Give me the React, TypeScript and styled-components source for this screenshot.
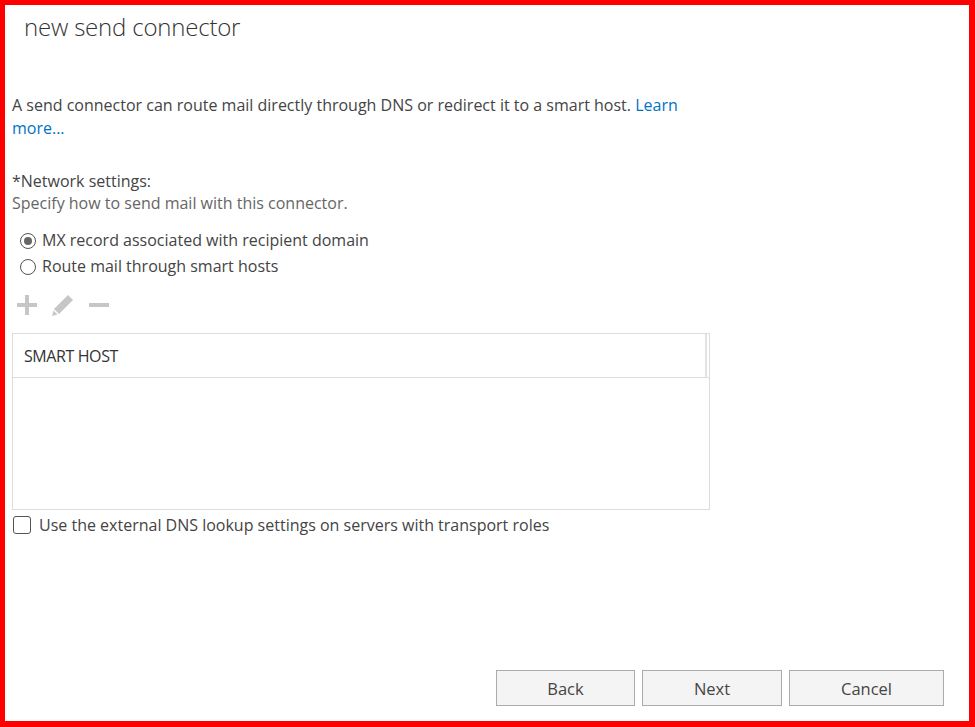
import styled, { createGlobalStyle } from 'styled-components';

const GlobalStyle = createGlobalStyle`
  html, body {
    margin: 0;
    padding: 0;
    background: #ffffff;
  }
  * {
    box-sizing: border-box;
  }
`;

const Frame = styled.div`
  width: 975px;
  height: 727px;
  border: 5px solid #ff0000;
  border-right-width: 6px;
  border-bottom-width: 6px;
  background: #ffffff;
  display: flex;
  flex-direction: column;
  font-family: "Open Sans", "Noto Sans", sans-serif;
  color: #444444;
  overflow: hidden;
`;

const Title = styled.h1`
  margin: 0;
  padding: 7px 0 0 19px;
  font-size: 24px;
  font-weight: 300;
  color: #333333;
  line-height: 30px;
  letter-spacing: -0.2px;
`;

const Body = styled.div`
  flex: 1;
  padding: 52px 0 0 7px;
  display: flex;
  flex-direction: column;
`;

const Intro = styled.p`
  margin: 0;
  width: 690px;
  font-size: 16px;
  line-height: 23px;
  color: #444444;
`;

const Link = styled.a`
  color: #0072c6;
  text-decoration: none;
`;

const Section = styled.div`
  margin-top: 30px;
  display: flex;
  flex-direction: column;
`;

const Label = styled.div<{ muted?: boolean }>`
  font-size: 16px;
  line-height: 22px;
  color: ${p => (p.muted ? '#666666' : '#444444')};
`;

const RadioList = styled.div`
  margin-top: 15px;
  padding-left: 8px;
  display: flex;
  flex-direction: column;
  gap: 3px;
`;

const RadioRow = styled.label`
  display: flex;
  align-items: center;
  gap: 6px;
  font-size: 16px;
  line-height: 23px;
  color: #444444;
`;

const RadioDot = styled.span<{ checked?: boolean }>`
  width: 16px;
  height: 16px;
  border-radius: 50%;
  border: 1.5px solid #555555;
  display: flex;
  align-items: center;
  justify-content: center;
  &::after {
    content: '';
    width: 8px;
    height: 8px;
    border-radius: 50%;
    background: #666666;
    display: ${p => (p.checked ? 'block' : 'none')};
  }
`;

const Toolbar = styled.div`
  margin-top: 13px;
  display: flex;
  align-items: center;
  gap: 12px;
  padding-left: 3px;
  height: 28px;
`;

const ToolIcon = styled.span`
  width: 24px;
  height: 24px;
  display: flex;
  align-items: center;
  justify-content: center;
  color: #c6c6c6;
`;

const Table = styled.div`
  margin-top: 14px;
  width: 698px;
  height: 177px;
  border: 1px solid #dddddd;
  display: flex;
  flex-direction: column;
`;

const HeaderRow = styled.div`
  height: 44px;
  display: flex;
  border-bottom: 1px solid #dddddd;
`;

const HeaderCell = styled.div`
  flex: 1;
  display: flex;
  align-items: center;
  padding-left: 11px;
  font-size: 16px;
  color: #333333;
  letter-spacing: -0.4px;
  border-right: 2px solid #e3e3e3;
`;

const HeaderGap = styled.div`
  width: 2px;
`;

const CheckRow = styled.label`
  margin-top: 4px;
  display: flex;
  align-items: center;
  gap: 8px;
  font-size: 16px;
  line-height: 22px;
  color: #444444;
`;

const CheckBox = styled.span`
  width: 18px;
  height: 18px;
  border: 1.5px solid #555555;
  border-radius: 3px;
  margin-left: 1px;
`;

const Footer = styled.div`
  display: flex;
  justify-content: flex-end;
  gap: 7px;
  padding: 0 25px 15px 0;
`;

const Button = styled.button<{ w: number }>`
  width: ${p => p.w}px;
  height: 36px;
  background: #f4f4f4;
  border: 1px solid #ababab;
  font-family: "Open Sans", "Noto Sans", sans-serif;
  font-size: 16.5px;
  color: #444444;
  padding: 0;
`;

export default function App() {
  return (
    <>
      <GlobalStyle />
      <Frame>
        <Title>new send connector</Title>
        <Body>
          <Intro>
            A send connector can route mail directly through DNS or redirect it to a smart host.{' '}
            <Link>Learn more...</Link>
          </Intro>
          <Section>
            <Label>*Network settings:</Label>
            <Label muted>Specify how to send mail with this connector.</Label>
            <RadioList>
              <RadioRow>
                <RadioDot checked />
                MX record associated with recipient domain
              </RadioRow>
              <RadioRow>
                <RadioDot />
                Route mail through smart hosts
              </RadioRow>
            </RadioList>
            <Toolbar>
              <ToolIcon>
                <svg width="22" height="22" viewBox="0 0 22 22">
                  <rect x="9" y="1" width="4" height="20" fill="currentColor" />
                  <rect x="1" y="9" width="20" height="4" fill="currentColor" />
                </svg>
              </ToolIcon>
              <ToolIcon>
                <svg width="24" height="24" viewBox="0 0 24 24">
                  <path d="M17 2 L22 7 L8 21 L3 16 Z" fill="currentColor" />
                  <path d="M2.5 17.5 L6.5 21.5 L1 23 Z" fill="currentColor" />
                </svg>
              </ToolIcon>
              <ToolIcon>
                <svg width="22" height="22" viewBox="0 0 22 22">
                  <rect x="1" y="9" width="20" height="4" fill="currentColor" />
                </svg>
              </ToolIcon>
            </Toolbar>
            <Table>
              <HeaderRow>
                <HeaderCell>SMART HOST</HeaderCell>
                <HeaderGap />
              </HeaderRow>
            </Table>
            <CheckRow>
              <CheckBox />
              Use the external DNS lookup settings on servers with transport roles
            </CheckRow>
          </Section>
        </Body>
        <Footer>
          <Button w={139}>Back</Button>
          <Button w={140}>Next</Button>
          <Button w={155}>Cancel</Button>
        </Footer>
      </Frame>
    </>
  );
}
